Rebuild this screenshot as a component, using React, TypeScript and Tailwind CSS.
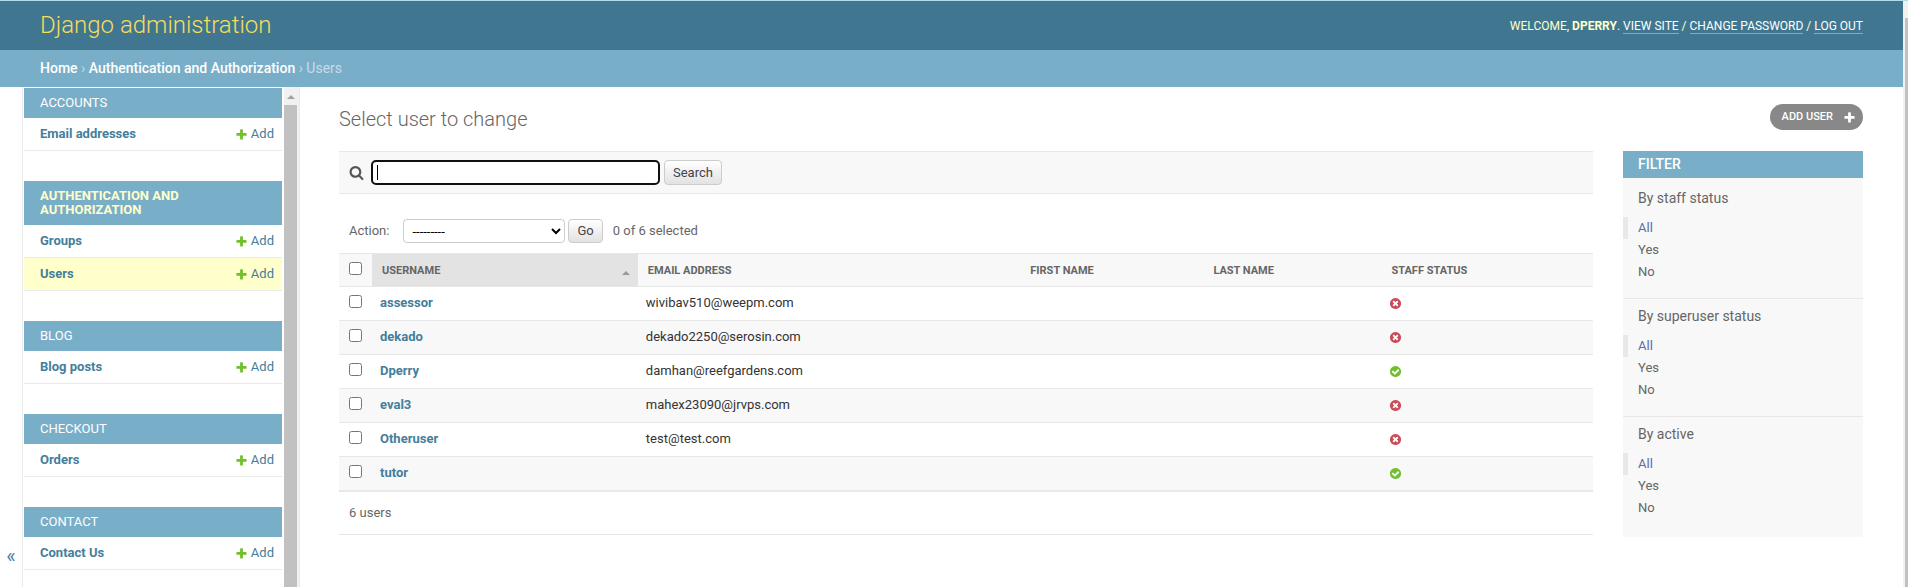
import React from "react";

const PLUS =
  "M1600 796v192q0 40-28 68t-68 28h-416v416q0 40-28 68t-68 28h-192q-40 0-68-28t-28-68v-416h-416q-40 0-68-28t-28-68v-192q0-40 28-68t68-28h416v-416q0-40 28-68t68-28h192q40 0 68 28t28 68v416h416q40 0 68 28t28 68z";
const SEARCH =
  "M1216 832q0-185-131.5-316.5t-316.5-131.5-316.5 131.5-131.5 316.5 131.5 316.5 316.5 131.5 316.5-131.5 131.5-316.5zm512 832q0 52-38 90t-90 38q-54 0-90-38l-343-342q-179 124-399 124-143 0-273.5-55.5t-225-150-150-225-55.5-273.5 55.5-273.5 150-225 225-150 273.5-55.5 273.5 55.5 225 150 150 225 55.5 273.5q0 220-124 399l343 343q37 37 37 90z";
const DISC =
  "q0 209-103 385.5t-279.5 279.5-385.5 103-385.5-103-279.5-279.5-103-385.5 103-385.5 279.5-279.5 385.5-103 385.5 103 279.5 279.5 103 385.5z";
const YES =
  "M1412 734q0-28-18-46l-91-90q-19-19-45-19t-45 19l-408 407-226-226q-19-19-45-19t-45 19l-91 90q-18 18-18 46 0 27 18 45l362 362q19 19 45 19 27 0 46-19l543-543q18-18 18-45zm252 162" +
  DISC;
const NO =
  "M1277 1122q0-26-19-45l-181-181 181-181q19-19 19-45 0-27-19-46l-90-90q-19-19-46-19-26 0-45 19l-181 181-181-181q-19-19-45-19-27 0-46 19l-90 90q-19 19-19 46 0 26 19 45l181 181-181 181q-19 19-19 45 0 27 19 46l90 90q19 19 46 19 26 0 45-19l181-181 181 181q19 19 45 19 27 0 46-19l90-90q19-19 19-46zm387-226" +
  DISC;

function Icon({ d, className, label }: { d: string; className: string; label?: string }) {
  return (
    <svg
      viewBox="0 0 1792 1792"
      className={`shrink-0 fill-current ${className}`}
      role={label ? "img" : undefined}
      aria-label={label}
      aria-hidden={label ? undefined : true}
    >
      <path d={d} />
    </svg>
  );
}

type Model = { name: string; current?: boolean };
type AppGroup = { title: string; current?: boolean; models: Model[] };

const apps: AppGroup[] = [
  { title: "Accounts", models: [{ name: "Email addresses" }] },
  {
    title: "Authentication and Authorization",
    current: true,
    models: [{ name: "Groups" }, { name: "Users", current: true }],
  },
  { title: "Blog", models: [{ name: "Blog posts" }] },
  { title: "Checkout", models: [{ name: "Orders" }] },
  { title: "Contact", models: [{ name: "Contact Us" }] },
];

const users = [
  { username: "assessor", email: "wivibav510@weepm.com", staff: false },
  { username: "dekado", email: "dekado2250@serosin.com", staff: false },
  { username: "Dperry", email: "damhan@reefgardens.com", staff: true },
  { username: "eval3", email: "mahex23090@jrvps.com", staff: false },
  { username: "Otheruser", email: "test@test.com", staff: false },
  { username: "tutor", email: "", staff: true },
];

const filters = ["By staff status", "By superuser status", "By active"];

function Header() {
  const link = "border-b border-[#79aec8] text-white";
  return (
    <header className="flex items-center justify-between bg-[#417690] px-10 text-[#ffc]">
      <h1 className="text-2xl leading-[49px] font-light text-[#f5dd5d]">
        <a href="#">Django administration</a>
      </h1>
      <div className="text-xs leading-[14px] uppercase">
        Welcome, <strong className="font-bold">dperry</strong>.{" "}
        <a href="#" className={link}>View site</a> / <a href="#" className={link}>Change password</a> /{" "}
        <a href="#" className={link}>Log out</a>
      </div>
    </header>
  );
}

function Breadcrumbs() {
  return (
    <nav aria-label="Breadcrumbs" className="bg-[#79aec8] px-10 text-sm leading-[37px] text-[#c4dce8]">
      <a href="#" className="font-medium text-white">Home</a> ›{" "}
      <a href="#" className="font-medium text-white">Authentication and Authorization</a> › Users
    </nav>
  );
}

function Sidebar() {
  return (
    <nav aria-label="Applications" className="flex min-w-0 flex-1 flex-col gap-[30px] pt-px pl-px">
      {apps.map((app) => (
        <section key={app.title}>
          <h2
            className={`bg-[#79aec8] px-4 py-2 text-[13px] leading-[14px] uppercase ${
              app.current ? "pr-16 font-bold text-[#ffc]" : "text-white"
            }`}
          >
            <a href="#">{app.title}</a>
          </h2>
          <ul>
            {app.models.map((m) => (
              <li
                key={m.name}
                className={`flex h-[33px] items-center justify-between border-b border-[#eaeaea] pr-2 pl-4 text-[13px] text-[#447e9b] ${
                  m.current ? "bg-[#ffc]" : ""
                }`}
              >
                <a href="#" className="font-bold">{m.name}</a>
                <a href="#" className="flex items-center gap-[3px]">
                  <Icon d={PLUS} className="size-[13px] text-[#70bf2b]" />
                  Add
                </a>
              </li>
            ))}
          </ul>
        </section>
      ))}
    </nav>
  );
}

function ResultTable() {
  const th = "px-[10px] pt-0.5 text-left text-[11px] font-bold text-[#666] uppercase";
  return (
    <table className="w-full table-fixed border-separate border-spacing-0 text-[13px]">
      <colgroup>
        <col className="w-[33px]" />
        <col className="w-[21.2%]" />
        <col className="w-[30.5%]" />
        <col className="w-[14.6%]" />
        <col className="w-[14.2%]" />
        <col />
      </colgroup>
      <thead>
        <tr className="h-[34px] bg-[#f8f8f8] *:border-y *:border-[#e8e8e8]">
          <th className="pl-[10px] text-left">
            <input type="checkbox" aria-label="Select all users" className="mb-[3px] block size-[13px]" />
          </th>
          <th className={`bg-[#e3e3e3] ${th}`}>
            <div className="flex items-center justify-between">
              <a href="#">Username</a>
              <svg viewBox="0 0 8 4" className="mt-1 mr-[-2px] h-1 w-2 fill-[#999]" aria-hidden>
                <path d="M0 4 4 0l4 4z" />
              </svg>
            </div>
          </th>
          <th className={th}><a href="#">Email address</a></th>
          <th className={th}><a href="#">First name</a></th>
          <th className={th}><a href="#">Last name</a></th>
          <th className={th}><a href="#">Staff status</a></th>
        </tr>
      </thead>
      <tbody>
        {users.map((u) => (
          <tr key={u.username} className="h-[34px] even:bg-[#f8f8f8] *:border-b *:border-[#e8e8e8]">
            <td className="pl-[10px]">
              <input type="checkbox" aria-label={`Select ${u.username}`} className="mb-1 block size-[13px]" />
            </td>
            <th className="px-2 pb-0.5 text-left font-bold text-[#447e9b]"><a href="#">{u.username}</a></th>
            <td className="px-2 pb-0.5 text-[#333]">{u.email}</td>
            <td />
            <td />
            <td className="px-2">
              <Icon
                d={u.staff ? YES : NO}
                label={u.staff ? "True" : "False"}
                className={u.staff ? "size-[13px] text-[#70bf2b]" : "size-[13px] text-[#cc4b56]"}
              />
            </td>
          </tr>
        ))}
      </tbody>
    </table>
  );
}

function Changelist() {
  const button =
    "rounded border border-[#ccc] bg-linear-to-b from-white to-[#e2e2e2] text-[#444]";
  return (
    <div className="min-w-0 flex-1">
      <form className="flex h-[43px] items-center border-y border-[#e8e8e8] bg-[#f8f8f8] px-[10px]">
        <label htmlFor="searchbar" aria-label="Search">
          <Icon d={SEARCH} className="size-[15px] text-[#555]" />
        </label>
        <div className="relative ml-[7px]">
          <input
            id="searchbar"
            type="text"
            className="block h-[25px] w-[289px] rounded-[5px] border-2 border-[#101010] bg-white px-1 text-[13px]"
          />
          <span className="absolute top-[5px] left-[6px] h-[15px] w-px bg-black" />
        </div>
        <button type="button" className={`ml-1 h-[25px] px-2 text-[13px] ${button}`}>Search</button>
      </form>
      <form className="flex h-[59px] items-end px-[10px] pb-[10px] text-[13px] leading-6">
        <label htmlFor="action">Action:</label>
        <select
          id="action"
          className="ml-[14px] h-6 w-[162px] rounded border border-[#ccc] bg-white px-1 text-[13px] text-black"
        >
          <option>---------</option>
        </select>
        <button type="button" className={`ml-[3px] h-6 px-2 leading-5 ${button}`}>Go</button>
        <span className="ml-[10px]">0 of 6 selected</span>
      </form>
      <ResultTable />
      <p className="border-y border-[#e8e8e8] px-[10px] text-[13px] leading-[42px]">6 users</p>
    </div>
  );
}

function Filters() {
  return (
    <aside className="w-60 shrink-0 bg-[#f8f8f8] pb-[3px]">
      <h2 className="bg-[#79aec8] px-[15px] text-sm leading-[27px] font-medium text-white uppercase">Filter</h2>
      {filters.map((title) => (
        <section key={title} className="border-b border-[#e8e8e8] pb-[15px] first-of-type:pt-[3px] last-of-type:border-b-0">
          <h3 className="px-[15px] pb-0.5 text-sm leading-[34px]">{title}</h3>
          <ul className="text-[13px] leading-[22px]">
            <li className="border-l-[5px] border-[#e8e8e8] pl-[10px] text-[#5b6da8]"><a href="#">All</a></li>
            <li className="pl-[15px]"><a href="#">Yes</a></li>
            <li className="pl-[15px]"><a href="#">No</a></li>
          </ul>
        </section>
      ))}
    </aside>
  );
}

export default function App() {
  return (
    <div className="flex h-screen overflow-hidden border-t border-[#b4dbe8] bg-white font-[Roboto,sans-serif] text-[#666]">
      <div className="flex min-w-0 flex-1 flex-col">
        <Header />
        <Breadcrumbs />
        <div className="flex min-h-0 flex-1">
          <div className="flex w-[300px] shrink-0 overflow-hidden border-r border-[#eaeaea]">
            <button
              type="button"
              aria-label="Toggle navigation"
              className="flex w-[23px] items-end justify-center border-r border-[#eaeaea] pb-[17px] text-xl leading-7 text-[#447e9b]"
            >
              «
            </button>
            <Sidebar />
            <div className="ml-0.5 flex w-[15px] shrink-0 flex-col bg-[#f1f1f1] pt-px pr-0.5">
              <div className="flex h-[17px] items-center justify-center">
                <svg viewBox="0 0 8 4" className="h-1 w-2 fill-[#a3a3a3]" aria-hidden>
                  <path d="M0 4 4 0l4 4z" />
                </svg>
              </div>
              <div className="flex-1 bg-[#c1c1c1]" />
            </div>
          </div>
          <main className="min-w-0 flex-1 pt-[17px] pr-10 pl-[39px]">
            <div className="flex items-start justify-between pb-[17px]">
              <h1 className="text-xl leading-[30px] font-light">Select user to change</h1>
              <a
                href="#"
                className="flex h-[26px] items-center gap-2.5 rounded-full bg-[#888] pr-[7px] pl-3 text-[11px] font-medium text-white uppercase"
              >
                Add user
                <Icon d={PLUS} className="size-[13px]" />
              </a>
            </div>
            <div className="flex items-start gap-[30px]">
              <Changelist />
              <Filters />
            </div>
          </main>
        </div>
      </div>
      <div className="flex w-[5px] shrink-0 flex-col bg-[#f1f1f1] pt-[17px] pl-0.5">
        <div className="flex-1 bg-[#c1c1c1]" />
      </div>
    </div>
  );
}
